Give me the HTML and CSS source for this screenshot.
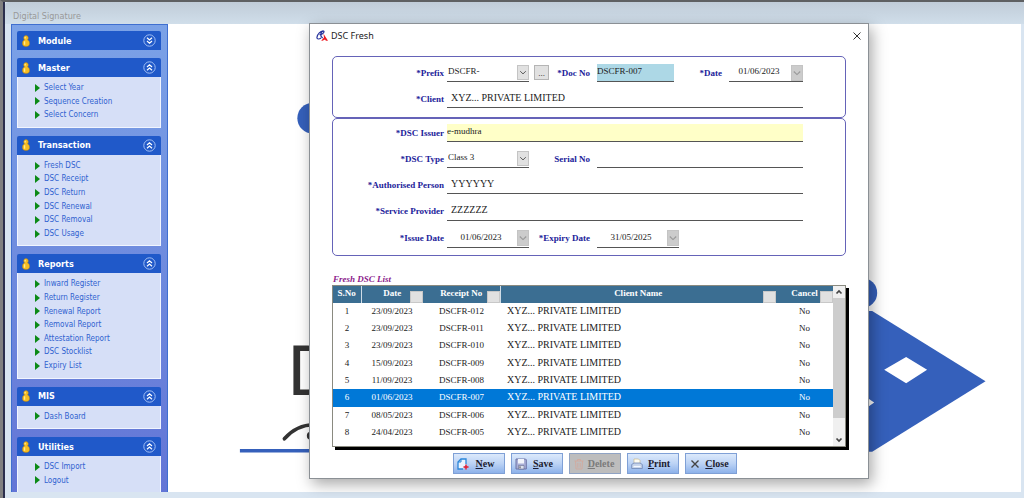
FILE: index.html
```html
<!DOCTYPE html>
<html lang="en">
<head>
<meta charset="utf-8">
<title>Digital Signature</title>
<link rel="stylesheet" href="styles.css">
</head>
<body>
<svg class="defs" aria-hidden="true">
  <symbol id="person" viewBox="0 0 8 12">
    <path d="M4 .6c1.500 0 2.300 1.100 2.300 2.400 0 .8-.3 1.500-.8 1.900C6.900 5.400 7.600 6.500 7.600 8.500c0 2-1.200 3-3.600 3S.4 10.500.4 8.500c0-2 .7-3.100 2.100-3.600-.5-.4-.8-1.100-.8-1.900C1.700 1.700 2.500.6 4 .6z" fill="#f6bd22" stroke="#b07f1a" stroke-width=".5"/>
    <path d="M3.200 1.800v1.800M2.600 6.200v3.600" stroke="#ffe98f" stroke-width="1.300"/>
  </symbol>
  <symbol id="fold-up" viewBox="0 0 13 13">
    <circle cx="6.500" cy="6.500" r="5.700" fill="none" stroke="#a3bff3"/>
    <path d="M4 6l2.500-2.300L9 6M4 9.300L6.500 7 9 9.300" fill="none" stroke="#fff" stroke-width="1.200"/>
  </symbol>
  <symbol id="fold-down" viewBox="0 0 13 13">
    <circle cx="6.500" cy="6.500" r="5.700" fill="none" stroke="#a3bff3"/>
    <path d="M4 3.700L6.500 6 9 3.700M4 7l2.500 2.300L9 7" fill="none" stroke="#fff" stroke-width="1.200"/>
  </symbol>
  <symbol id="chevron" viewBox="0 0 8 8">
    <path d="M.8 2.500L4 5.600l3.200-3.100" fill="none" stroke="currentColor" stroke-width="1.100"/>
  </symbol>
</svg>
<div class="window">
  <header class="window-title">Digital Signature</header>
  <div class="workspace">
    <nav class="sidebar">
      <section class="panel">
        <h2 class="panel-head"><svg class="person"><use href="#person"/></svg><span>Module</span><button class="fold" aria-label="Expand Module"><svg><use href="#fold-down"/></svg></button></h2>
      </section>
      <section class="panel">
        <h2 class="panel-head"><svg class="person"><use href="#person"/></svg><span>Master</span><button class="fold" aria-label="Collapse Master"><svg><use href="#fold-up"/></svg></button></h2>
        <ul class="links"><li><a href="#">Select Year</a></li><li><a href="#">Sequence Creation</a></li><li><a href="#">Select Concern</a></li></ul>
      </section>
      <section class="panel">
        <h2 class="panel-head"><svg class="person"><use href="#person"/></svg><span>Transaction</span><button class="fold" aria-label="Collapse Transaction"><svg><use href="#fold-up"/></svg></button></h2>
        <ul class="links"><li><a href="#">Fresh DSC</a></li><li><a href="#">DSC Receipt</a></li><li><a href="#">DSC Return</a></li><li><a href="#">DSC Renewal</a></li><li><a href="#">DSC Removal</a></li><li><a href="#">DSC Usage</a></li></ul>
      </section>
      <section class="panel">
        <h2 class="panel-head"><svg class="person"><use href="#person"/></svg><span>Reports</span><button class="fold" aria-label="Collapse Reports"><svg><use href="#fold-up"/></svg></button></h2>
        <ul class="links"><li><a href="#">Inward Register</a></li><li><a href="#">Return Register</a></li><li><a href="#">Renewal Report</a></li><li><a href="#">Removal Report</a></li><li><a href="#">Attestation Report</a></li><li><a href="#">DSC Stocklist</a></li><li><a href="#">Expiry List</a></li></ul>
      </section>
      <section class="panel">
        <h2 class="panel-head"><svg class="person"><use href="#person"/></svg><span>MIS</span><button class="fold" aria-label="Collapse MIS"><svg><use href="#fold-up"/></svg></button></h2>
        <ul class="links"><li><a href="#">Dash Board</a></li></ul>
      </section>
      <section class="panel panel-last">
        <h2 class="panel-head"><svg class="person"><use href="#person"/></svg><span>Utilities</span><button class="fold" aria-label="Collapse Utilities"><svg><use href="#fold-up"/></svg></button></h2>
        <ul class="links"><li><a href="#">DSC Import</a></li><li><a href="#">Logout</a></li></ul>
      </section>
    </nav>
    <main class="canvas">
      <svg class="backdrop" viewBox="167 24 854 468" aria-hidden="true">
        <circle cx="312" cy="118" r="15.500" fill="#3560bb"/>
        <circle cx="862" cy="293" r="15" fill="#3560bb"/>
        <path d="M860 311h12l113.500 70.500L872 452h-12z" fill="#3560bb"/>
        <path d="M884 370l22-13 21 13-21 13.500zM867 398l7 4.700-7 5z" fill="#fff"/>
        <text class="backdrop-letter" x="286" y="395">D</text>
        <path d="M283.500 439Q296 425 313 425" fill="none" stroke="#333" stroke-width="3.600" stroke-linecap="round"/>
        <circle cx="310" cy="436" r="4" fill="#333"/>
        <path d="M239 451h90" stroke="#3560bb" stroke-width="3.500"/>
      </svg>
    </main>
  </div>
</div>

<div class="dialog" role="dialog" aria-labelledby="dialog-title">
  <header class="dialog-bar">
    <svg class="app-mark" viewBox="0 0 12 11" aria-hidden="true">
      <path d="M7.500 1.200C5 .2 1 4.500.9 7.400c0 2.200 2.500 1.800 4.200.6M3.500 4.500C5.500 4.800 8 3 8 1.700 8 .6 6 1 5.300 2.600c-.8 1.900-.3 4.400 1.400 5.400" fill="none" stroke="#24309c" stroke-width="1.200"/>
      <path d="M7.500 3.800L12 10.800H9.900L9 9.400 6.500 10.800H5.200L8 7.400z" fill="#ee1c24"/>
    </svg>
    <h1 id="dialog-title">DSC Fresh</h1>
    <button class="dialog-close" aria-label="Close window"><svg viewBox="0 0 10 10"><path d="M1.500 1.500l7 7M8.500 1.500l-7 7" stroke="#333"/></svg></button>
  </header>
  <form class="dialog-body">
    <div class="group group-doc">
      <div class="row">
        <label class="lead" for="prefix">*Prefix</label>
        <span class="combo"><select id="prefix"><option>DSCFR-</option></select><svg class="drop"><use href="#chevron"/></svg></span>
        <button type="button" class="more" aria-label="Browse prefixes">...</button>
        <label class="doc-label" for="docno">*Doc No</label>
        <input class="doc-input" id="docno" value="DSCFR-007">
        <label class="date-label" for="date">*Date</label>
        <span class="combo date short"><input id="date" value="01/06/2023"><svg class="drop off"><use href="#chevron"/></svg></span>
      </div>
      <div class="row">
        <label class="lead" for="client">*Client</label>
        <input class="fill name" id="client" value="XYZ... PRIVATE LIMITED">
      </div>
    </div>
    <div class="group group-dsc">
      <div class="row">
        <label class="lead" for="issuer">*DSC Issuer</label>
        <input class="fill issuer" id="issuer" value="e-mudhra">
      </div>
      <div class="row">
        <label class="lead" for="type">*DSC Type</label>
        <span class="combo"><select id="type"><option>Class 3</option></select><svg class="drop"><use href="#chevron"/></svg></span>
        <label class="second" for="serial">Serial No</label>
        <input class="fill" id="serial">
      </div>
      <div class="row">
        <label class="lead" for="person-name">*Authorised Person</label>
        <input class="fill name" id="person-name" value="YYYYYY">
      </div>
      <div class="row tall">
        <label class="lead" for="provider">*Service Provider</label>
        <input class="fill name" id="provider" value="ZZZZZZ">
      </div>
      <div class="row tall">
        <label class="lead" for="issue">*Issue Date</label>
        <span class="combo date"><input id="issue" value="01/06/2023"><svg class="drop off"><use href="#chevron"/></svg></span>
        <label class="second" for="expiry">*Expiry Date</label>
        <span class="combo date"><input id="expiry" value="31/05/2025"><svg class="drop off"><use href="#chevron"/></svg></span>
      </div>
    </div>

    <h2 class="list-title">Fresh DSC List</h2>
    <div class="list">
      <table>
        <colgroup><col class="c-no"><col class="c-date"><col class="c-receipt"><col><col class="c-cancel"></colgroup>
        <thead><tr>
          <th>S.No</th>
          <th>Date<button type="button" class="filter" aria-label="Filter date"></button></th>
          <th>Receipt No<button type="button" class="filter" aria-label="Filter receipt"></button></th>
          <th>Client Name<button type="button" class="filter" aria-label="Filter client"></button></th>
          <th>Cancel<button type="button" class="filter" aria-label="Filter cancel"></button></th>
        </tr></thead>
        <tbody>
          <tr><td>1</td><td>23/09/2023</td><td>DSCFR-012</td><td>XYZ... PRIVATE LIMITED</td><td>No</td></tr>
          <tr><td>2</td><td>23/09/2023</td><td>DSCFR-011</td><td>XYZ... PRIVATE LIMITED</td><td>No</td></tr>
          <tr><td>3</td><td>23/09/2023</td><td>DSCFR-010</td><td>XYZ... PRIVATE LIMITED</td><td>No</td></tr>
          <tr><td>4</td><td>15/09/2023</td><td>DSCFR-009</td><td>XYZ... PRIVATE LIMITED</td><td>No</td></tr>
          <tr><td>5</td><td>11/09/2023</td><td>DSCFR-008</td><td>XYZ... PRIVATE LIMITED</td><td>No</td></tr>
          <tr class="selected"><td>6</td><td>01/06/2023</td><td>DSCFR-007</td><td>XYZ... PRIVATE LIMITED</td><td>No</td></tr>
          <tr><td>7</td><td>08/05/2023</td><td>DSCFR-006</td><td>XYZ... PRIVATE LIMITED</td><td>No</td></tr>
          <tr><td>8</td><td>24/04/2023</td><td>DSCFR-005</td><td>XYZ... PRIVATE LIMITED</td><td>No</td></tr>
        </tbody>
      </table>
      <div class="scroll" aria-hidden="true">
        <svg viewBox="0 0 12 12"><path d="M3.500 7.500L6 5l2.500 2.500" fill="none" stroke="#444" stroke-width="1.700"/></svg>
        <div class="scroll-track"><div class="scroll-thumb"></div></div>
        <svg viewBox="0 0 12 12"><path d="M3.500 4.500L6 7l2.500-2.500" fill="none" stroke="#444" stroke-width="1.700"/></svg>
      </div>
    </div>

    <div class="actions">
      <button type="button"><svg viewBox="0 0 12 12"><path d="M6 11H1V4l3-3h5v5" fill="#eaf4ff" stroke="#2b86d9" stroke-width="1.300"/><path d="M1 4h3V1" fill="none" stroke="#2b86d9"/><path d="M9 6.500v5M6.500 9h5" stroke="#e8192c" stroke-width="1.400"/></svg><span><u>N</u>ew</span></button>
      <button type="button"><svg viewBox="0 0 12 12"><path d="M1 1h9.500l.8.800V11H1z" fill="#a9aed6" stroke="#6d74a6"/><path d="M3 1h6v4.500H3z" fill="#f3f5fb"/><path d="M3.500 7.500h5.500V11H3.500z" fill="#dde1ee" stroke="#555b80" stroke-width=".5"/><path d="M5 8.300v2" stroke="#444"/></svg><span><u>S</u>ave</span></button>
      <button type="button" disabled><svg viewBox="0 0 12 12"><path d="M1.500 3h9M4.500 3V1.500h3V3M2.500 3l.5 8h6l.5-8M4.800 5v4.500M7.200 5v4.500" fill="none" stroke="#d3a99d" stroke-width=".9"/></svg><span><u>D</u>elete</span></button>
      <button type="button"><svg viewBox="0 0 12 12"><path d="M3 6V1h4.500L9 2.500V6" fill="#fffdf2" stroke="#c9b98f" stroke-width=".7"/><path d="M.7 6.500L3 5h6l2.300 1.500v4H.7z" fill="#c5d3ea" stroke="#6f86b4" stroke-width=".8"/><path d="M2.500 8.500h7" stroke="#f5f8ff" stroke-width="1.200"/></svg><span><u>P</u>rint</span></button>
      <button type="button"><svg viewBox="0 0 12 12"><path d="M2.500 2.500l7 7M9.500 2.500l-7 7" stroke="#444" stroke-width="1.400"/></svg><span><u>C</u>lose</span></button>
    </div>
  </form>
</div>
</body>
</html>
```
FILE: styles.css
```css
* { box-sizing: border-box; }

body {
  margin: 0;
  min-height: 100vh;
  font-family: "Liberation Serif", serif;
  font-size: 10px;
  color: #222;
  background: #777;
  overflow: hidden;
}

button, input, select {
  margin: 0;
  padding: 0;
  border: 0;
  border-radius: 0;
  background: none;
  font: inherit;
  color: inherit;
}

.defs { position: absolute; width: 0; height: 0; }

/* Main window */
.window {
  display: flex;
  flex-direction: column;
  height: 100vh;
  padding: 0 3px 6px 5px;
  border-top: 2px solid #5e6062;
  border-left: 3px solid #808080;
  background: linear-gradient(to right, #2b2f4d 2px, #d9e5f1 2px);
}

.window-title {
  height: 22px;
  margin: 0 -3px;
  padding: 3px 8px 0;
  border-top-left-radius: 4px;
  background: linear-gradient(#c0ccd8, #d0deea);
  font: 9px/22px "DejaVu Sans Condensed", "DejaVu Sans", sans-serif;
  color: #999;
}

.workspace { display: flex; flex: 1; min-height: 0; padding-left: 3px; }

.sidebar {
  flex: 0 0 157px;
  display: flex;
  flex-direction: column;
  gap: 8px;
  padding: 6px 6px 0 5px;
  border: 1px solid #3f6fd0;
  border-bottom: 0;
  background: linear-gradient(#7ba2e7, #6375d6);
  overflow: hidden;
  font-family: "DejaVu Sans Condensed", "DejaVu Sans", sans-serif;
  font-size: 8px;
}

.panel { flex: none; }
.panel-last { flex: 1 0 auto; display: flex; flex-direction: column; }
.panel-last .links { flex: 1; border-bottom: 0; }

.panel-head {
  display: flex;
  align-items: center;
  height: 19px;
  margin: 0;
  padding: 0 5px 0 5px;
  border-radius: 2px 2px 0 0;
  background: #2059c9;
  color: #fff;
  font-size: 9px;
}
.panel-head span { flex: 1; padding-left: 8px; }
.person { width: 8px; height: 12px; }
.fold, .fold svg { display: block; width: 13px; height: 13px; }

.links {
  margin: 0;
  padding: 4px 17px 5px;
  border: 1px solid #f1f5ff;
  border-top: 0;
  background: #d6dff7;
  list-style: none;
  line-height: 1.7;
}
.links li { display: flex; align-items: center; gap: 4px; }
.links li::before {
  content: "";
  border: 4px solid transparent;
  border-left: 5px solid #0c8a17;
  border-right: 0;
}
.links a { color: #2f62d0; text-decoration: none; }

.canvas { flex: 1; background: #fff; }
.backdrop { display: block; width: 100%; height: 100%; }
.backdrop-letter { font: 68px "DejaVu Sans", sans-serif; fill: #333; }

/* Dialog */
.dialog {
  position: absolute;
  top: 23px;
  left: 309px;
  right: 155px;
  border: 1px solid #8b9095;
  background: #fff;
  box-shadow: 3px 5px 14px rgba(0, 0, 0, .35);
}

.dialog-bar {
  display: flex;
  align-items: center;
  gap: 3px;
  height: 23px;
  padding: 0 6px;
}
.dialog-bar h1 { flex: 1; margin: 0; font: 9px "Noto Sans", sans-serif; color: #222; }
.app-mark { width: 12px; height: 11px; }
.dialog-close, .dialog-close svg { display: block; width: 10px; height: 10px; }

.dialog-body { padding: 9px 22px 4px; }

.group {
  display: flex;
  flex-direction: column;
  gap: 8px;
  border: 1px solid #6563b8;
  border-radius: 5px;
}
.group-doc { padding: 7px 42px 9px 0; }
.group-dsc { padding: 5px 42px 7px 0; }

.row { display: flex; height: 18px; }
.row.tall { height: 19px; }
.row label {
  flex: none;
  line-height: 18px;
  text-align: right;
  white-space: nowrap;
  font-weight: bold;
  font-size: 9px;
  color: #22229a;
}
.row .lead { width: 114px; padding-right: 3px; }
.row .doc-label { width: 48px; padding-right: 7px; }
.row .date-label { width: 55px; padding-right: 7px; }
.row .second { width: 68px; padding-right: 7px; }

.row input, .combo {
  min-width: 0;
  height: 100%;
  border-bottom: 1px solid #555;
}
.row input { padding: 0 3px 3px 0; font-size: 9px; }
.row .fill { flex: 1; }
.row .name { padding-left: 4px; font-size: 10px; }
.row .doc-input { flex: 1; background: #add8e6; }
.row .issuer { background: #ffffc8; }

.combo { position: relative; flex: 0 0 82px; display: flex; }
.combo.short { flex-basis: 74px; }
.combo select {
  width: 100%;
  padding: 0 12px 3px 1px;
  appearance: none;
  font-size: 9px;
}
.combo.date input { width: 100%; padding-right: 14px; border: 0; text-align: center; }
.drop {
  position: absolute;
  top: 1px;
  right: 0;
  width: 12px;
  height: 15px;
  padding: 3px 1px;
  border: 1px solid #c4c4c4;
  background: #e1e1e1;
  color: #555;
  pointer-events: none;
}
.drop.off { height: 16px; background: #ccc; color: #999; }

.more {
  width: 15px;
  height: 15px;
  margin: 1px 0 0 5px;
  flex: none;
  border: 1px solid #b5b5b5;
  background: #e1e1e1;
  font-size: 9px;
  line-height: 12px;
}

/* Records list */
.list-title {
  margin: 17px 0 0 1px;
  font-size: 9px;
  line-height: 12px;
  font-style: italic;
  color: #8b1a8b;
}
.list {
  display: flex;
  align-items: flex-start;
  border: 1px solid #8a8a80;
  background: #fff;
  box-shadow: 3px 3px 0 #000;
}
.list table {
  flex: 1;
  margin-bottom: 5px;
  table-layout: fixed;
  border-collapse: collapse;
  text-align: center;
  font-size: 9px;
}
.c-no { width: 28px; }
.c-date { width: 62px; }
.c-receipt { width: 77px; }
.c-cancel { width: 57px; }

.list th {
  position: relative;
  height: 17px;
  padding: 0 0 3px;
  background: #3b6e92;
  color: #fff;
  line-height: 12px;
}
.list th:nth-child(1), .list th:nth-child(3) { border-right: 1px solid #cfdce6; }
.filter {
  position: absolute;
  right: 0;
  bottom: 0;
  width: 13px;
  height: 12px;
  border: 1px solid #c8c8c8;
  background: #e1e1e1;
}
.list td { height: 17px; padding: 0 0 2px; line-height: 12px; }
.list tr:nth-child(3n) td { height: 18px; }
.list td:nth-child(4) { padding-left: 7px; text-align: left; font-size: 10px; }
.list .selected td { background: #0078d7; color: #fff; }

.scroll {
  align-self: stretch;
  flex: 0 0 12px;
  display: flex;
  flex-direction: column;
  background: #f0f0f0;
}
.scroll svg { width: 12px; height: 12px; }
.scroll-track { flex: 1; }
.scroll-thumb { height: 88%; background: #cdcdcd; }

/* Actions */
.actions {
  display: flex;
  justify-content: center;
  gap: 6px;
  margin-top: 6px;
  padding-left: 12px;
}
.actions button {
  display: flex;
  align-items: center;
  width: 52px;
  height: 21px;
  padding: 0 3px;
  border: 1px solid #7fa0d6;
  background: linear-gradient(#dce9fb, #bcd3f5 50%, #8db2ea);
  font-weight: bold;
  font-size: 10px;
  color: #1c1c30;
}
.actions svg { flex: none; width: 12px; height: 12px; }
.actions span { flex: 1; text-align: center; }
.actions button:disabled { border-color: #8fa3c4; background: #bdbdbd; color: #7b7b7b; }
```
